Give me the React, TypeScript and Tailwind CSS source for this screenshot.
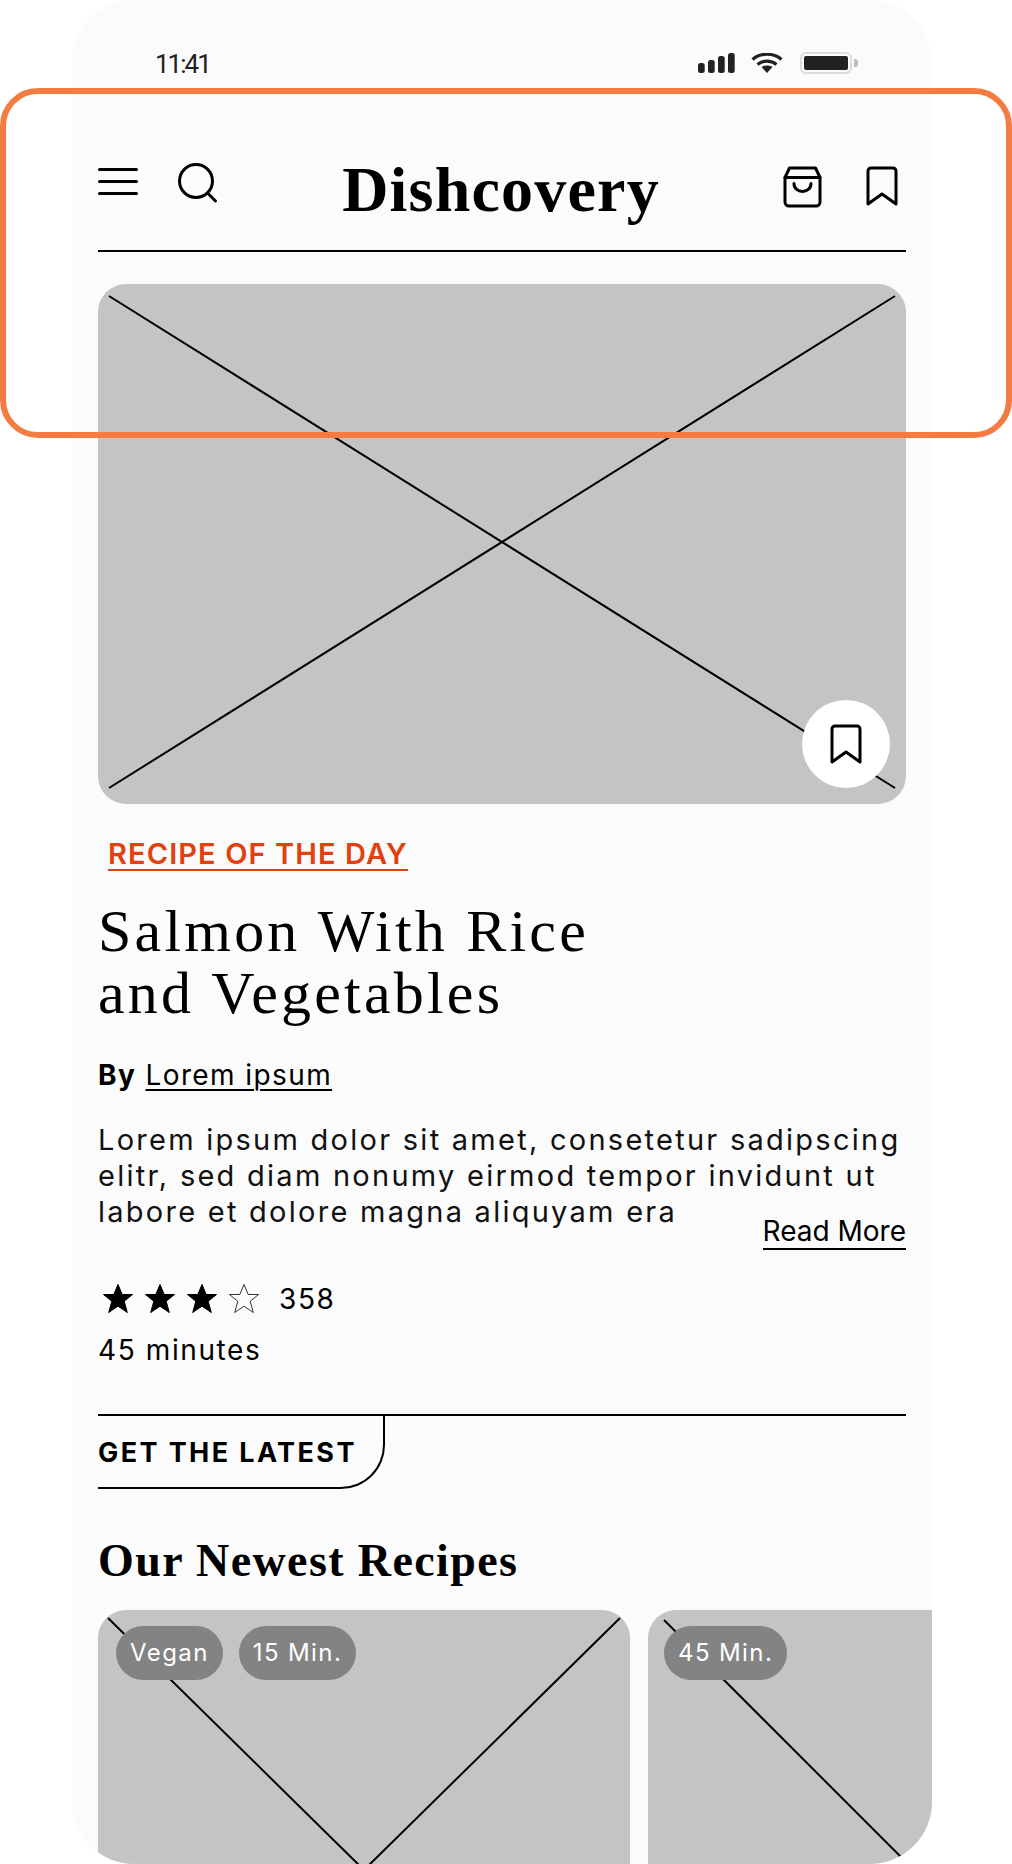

const Placeholder = ({ w, h, x, top, bottom }: { w: number; h: number; x: number; top: number; bottom: number }) => (
  <svg className="absolute left-0 top-0" width={w} height={h} viewBox={`0 0 ${w} ${h}`} fill="none">
    <path d={`M${x} ${top}L${w - x} ${h - bottom}M${w - x} ${top}L${x} ${h - bottom}`} stroke="#000" strokeWidth="2" />
  </svg>
);

const Bookmark = () => (
  <svg width="32" height="40" viewBox="0 0 32 40" fill="none" stroke="#000" strokeWidth="3" strokeLinecap="round" strokeLinejoin="round">
    <path d="M2 38V5a3 3 0 0 1 3-3h22a3 3 0 0 1 3 3v33L16 28z" />
  </svg>
);

const Star = ({ filled }: { filled?: boolean }) => (
  <svg width="32" height="32" viewBox="0 0 32 32" fill={filled ? "#000" : "none"} stroke="#000" strokeWidth={filled ? 1 : 0.8}>
    <path d="M16 1.5l4.2 10h10.3l-8.3 6.8 3.1 11.2L16 23.2 6.7 29.5l3.1-11.2L1.5 11.5h10.3z" />
  </svg>
);

const Pill = ({ children }: { children: string }) => (
  <span className="flex h-[54px] items-center rounded-full bg-[#838383] px-[14px] text-[24px] leading-none tracking-[1.4px] text-white">
    {children}
  </span>
);

export default function App() {
  return (
    <div className="relative h-[1864px] w-[1012px] overflow-hidden bg-white font-['Inter',sans-serif] text-black">
      <div className="mx-[72px] h-[1864px] w-[860px] overflow-hidden rounded-[62px] bg-[#fbfbfb] px-[26px]">
        {/* status bar */}
        <div className="flex h-[120px] items-start justify-between pl-[57px] pr-[48px] pt-[46px]">
          <span className="mt-[2px] font-['Roboto',sans-serif] text-[26px] leading-[32px] tracking-[-2px] text-[#222]">11:41</span>
          <div className="mt-[6px] flex items-start">
            <svg className="mt-[1px]" width="37" height="20" viewBox="0 0 37 20" fill="#222">
              <rect x="0" y="10" width="6.7" height="10" rx="2.5" />
              <rect x="10" y="7" width="6.7" height="13" rx="2.5" />
              <rect x="20" y="3" width="6.7" height="17" rx="2.5" />
              <rect x="30" y="0" width="6.7" height="20" rx="2.5" />
            </svg>
            <svg className="ml-[16px] mt-[1px]" width="32" height="20" viewBox="0 0 32 20" fill="none" stroke="#222" strokeWidth="3.2">
              <path d="M1.5 6.5C9.5-.5 22.5-.5 30.5 6.5" />
              <path d="M6.5 11.5c5.5-4.5 13.5-4.5 19 0" />
              <path d="M10.5 14l5.5 6 5.5-6c-3.2-2-7.8-2-11 0z" fill="#222" stroke="none" />
            </svg>
            <div className="ml-[17px] flex items-center">
              <div className="h-[22px] w-[52px] rounded-[6px] border-2 border-[#dcdcdc] p-[2px]">
                <div className="h-full w-full rounded-[2px] bg-[#222]" />
              </div>
              <div className="ml-[2px] h-[8px] w-[4px] rounded-r-[3px] bg-[#bdbdbd]" />
            </div>
          </div>
        </div>

        {/* header */}
        <div className="flex h-[132px] items-start justify-between border-b-2 border-black">
          <div className="flex items-start">
            <svg className="mt-[47px]" width="40" height="30" viewBox="0 0 40 30" stroke="#000" strokeWidth="3" strokeLinecap="round">
              <path d="M1.5 2.5h37M1.5 14.5h37M1.5 26.5h37" />
            </svg>
            <svg className="ml-[39px] mt-[42px]" width="42" height="42" viewBox="0 0 42 42" fill="none" stroke="#000" strokeWidth="3">
              <circle cx="19" cy="19" r="16.5" />
              <path d="M30.5 31l8 8" strokeLinecap="round" />
            </svg>
          </div>
          <div className="mt-[32px] font-['Liberation_Serif',serif] text-[64px] font-bold leading-[76px] tracking-[1.2px]">Dishcovery</div>
          <div className="flex items-start pr-[8px]">
            <svg className="mt-[46px]" width="39" height="42" viewBox="0 0 39 42" fill="none" stroke="#000" strokeWidth="3" strokeLinecap="round" strokeLinejoin="round">
              <path d="M2 11.5V36a4 4 0 0 0 4 4h27a4 4 0 0 0 4-4V11.5L32.5 2h-26z" />
              <path d="M2 11.5h35" />
              <path d="M11 17.5c0 10.5 17 10.5 17 0" />
            </svg>
            <div className="ml-[44px] mt-[46px]">
              <Bookmark />
            </div>
          </div>
        </div>

        {/* hero */}
        <div className="relative mt-[32px] h-[520px] w-[808px] overflow-hidden rounded-[28px] bg-[#c4c4c4]">
          <Placeholder w={808} h={520} x={11} top={12} bottom={16} />
          <div className="absolute left-[704px] top-[416px] flex h-[88px] w-[88px] items-center justify-center rounded-full bg-white">
            <Bookmark />
          </div>
        </div>

        {/* recipe */}
        <div className="mt-[35px] ml-[10px] w-fit border-b-2 border-[#e2400f] text-[29px] font-semibold leading-[30px] tracking-[1.1px] text-[#e2400f]">RECIPE OF THE DAY</div>
        <h1 className="mt-[29px] font-['Liberation_Serif',serif] text-[60px] font-normal leading-[62px] tracking-[3.2px]">
          Salmon With Rice
          <br />
          and Vegetables
        </h1>
        <div className="mt-[33px] text-[28px] leading-[36px] tracking-[1.4px]">
          <span className="font-bold">By</span> <span className="underline decoration-[2px] underline-offset-[4px]">Lorem ipsum</span>
        </div>
        <div className="relative mt-[29px]">
          <p className="text-[29px] leading-[36px] tracking-[2.26px] text-[#111]">
            Lorem ipsum dolor sit amet, consetetur sadipscing
            <br />
            elitr, sed diam nonumy eirmod tempor invidunt ut
            <br />
            labore et dolore magna aliquyam era
          </p>
          <span className="absolute bottom-[-20px] right-0 border-b-2 border-black text-[28px] leading-[34px]">Read More</span>
        </div>

        {/* rating */}
        <div className="mt-[52px] flex h-[34px] items-center">
          <div className="ml-[4px] flex gap-[10px]">
            <Star filled />
            <Star filled />
            <Star filled />
            <Star />
          </div>
          <span className="ml-[19px] text-[28px] leading-none tracking-[1.6px]">358</span>
        </div>
        <div className="mt-[16px] text-[28px] leading-[36px] tracking-[1.6px]">45 minutes</div>

        {/* tab */}
        <div className="mt-[46px] border-t-2 border-black">
          <div className="flex h-[73px] w-[287px] items-center rounded-br-[44px] border-b-2 border-r-2 border-black pt-[2px]">
            <span className="text-[27px] font-bold leading-none tracking-[2.4px]">GET THE LATEST</span>
          </div>
        </div>

        <h2 className="mt-[44px] font-['Liberation_Serif',serif] text-[46px] font-bold leading-[56px] tracking-[1.4px]">Our Newest Recipes</h2>

        {/* cards */}
        <div className="mt-[21px] flex gap-[18px]">
          <div className="relative h-[520px] w-[532px] shrink-0 overflow-hidden rounded-[28px] bg-[#c4c4c4]">
            <Placeholder w={532} h={520} x={10} top={8} bottom={8} />
            <div className="absolute left-[18px] top-[16px] flex gap-[16px]">
              <Pill>Vegan</Pill>
              <Pill>15 Min.</Pill>
            </div>
          </div>
          <div className="relative h-[600px] w-[600px] shrink-0 overflow-hidden rounded-[28px] bg-[#c4c4c4]">
            <Placeholder w={600} h={600} x={16} top={10} bottom={22} />
            <div className="absolute left-[16px] top-[16px] flex gap-[16px]">
              <Pill>45 Min.</Pill>
            </div>
          </div>
        </div>
      </div>

      {/* annotation frame */}
      <div className="pointer-events-none absolute left-0 top-[88px] h-[350px] w-[1012px] rounded-[38px] border-[6px] border-[#f47c42]" />
    </div>
  );
}
